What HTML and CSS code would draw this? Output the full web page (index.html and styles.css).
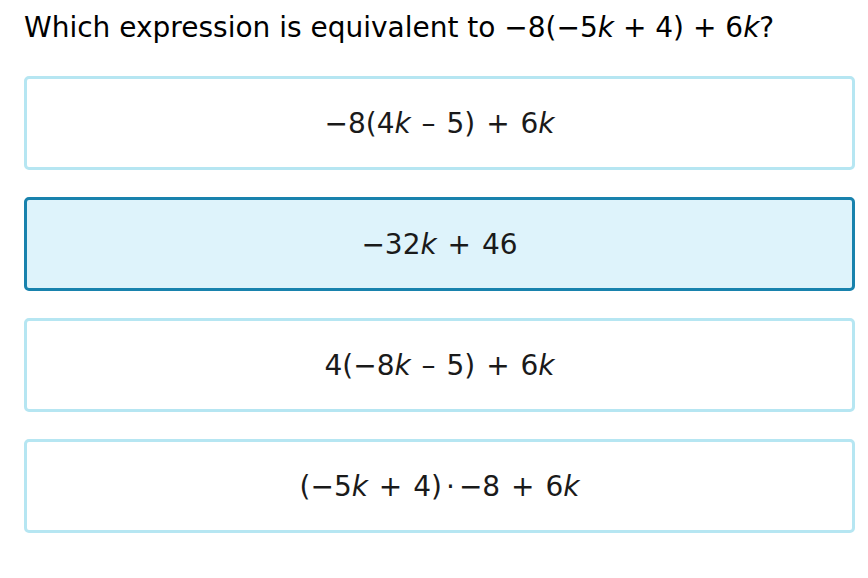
FILE: index.html
```html
<!DOCTYPE html>
<html>
<head>
<meta charset="utf-8">
<link rel="stylesheet" href="styles.css">
</head>
<body>
<div class="question">
  <h1 class="prompt">Which expression is equivalent to −8(−5<i>k</i> + 4) + 6<i>k</i>?</h1>
  <div class="choices">
    <div class="choice"><span class="expr">−8(4<i>k</i> – 5) + 6<i>k</i></span></div>
    <div class="choice selected"><span class="expr">−32<i>k</i> + 46</span></div>
    <div class="choice"><span class="expr">4(−8<i>k</i> – 5) + 6<i>k</i></span></div>
    <div class="choice"><span class="expr">(−5<i>k</i> + 4)<span class="dot">·</span>−8 + 6<i>k</i></span></div>
  </div>
</div>
</body>
</html>
```
FILE: styles.css
```css
html, body {
  margin: 0;
  padding: 0;
  background: #fff;
}
body {
  font-family: "DejaVu Sans", Verdana, sans-serif;
  color: #000;
}
.question {
  padding: 8px 13px 0 24px;
}
.prompt {
  margin: 0;
  font-size: 28px;
  font-weight: normal;
  line-height: 40px;
}
.choices {
  margin-top: 28px;
  display: flex;
  flex-direction: column;
  gap: 27px;
}
.choice {
  height: 94px;
  box-sizing: border-box;
  border: 3px solid #b6e6f2;
  border-radius: 5px;
  display: flex;
  align-items: center;
  justify-content: center;
  font-size: 28px;
  color: #1a1a1a;
}
.expr {
  word-spacing: 2px;
}
.choice.selected {
  background: #def3fb;
  border-color: #1882ad;
}
.dot {
  margin: 0 4px;
}
```
